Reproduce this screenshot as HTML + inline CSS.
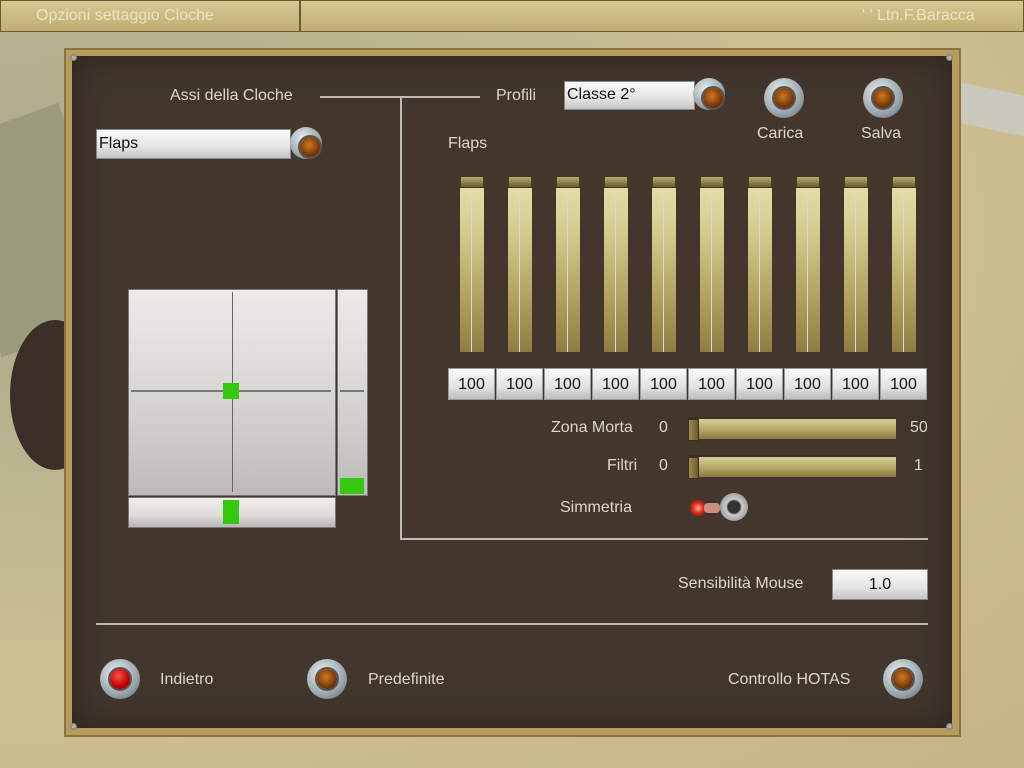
<!DOCTYPE html><html><head><meta charset="utf-8"><style>
*{margin:0;padding:0;box-sizing:border-box}
body{width:1024px;height:768px;overflow:hidden;position:relative;font-family:"Liberation Sans",sans-serif;background:#c9b98c}
.a{position:absolute}
.t{position:absolute;color:#ddd6cc;font-size:16px;white-space:nowrap}
.box{position:absolute;background:linear-gradient(#fafafa,#e4e4e4 60%,#c4c4c4);color:#111;font-size:16px;border:1px solid #888}
.knob{position:absolute;width:40px;height:40px;border-radius:50%;background:radial-gradient(circle at 40% 35%,#e8eef0,#9aa6ac 60%,#5a6268)}
.knob:after{content:"";position:absolute;left:10px;top:10px;width:20px;height:20px;border-radius:50%;background:radial-gradient(circle at 45% 40%,#d07a20,#6a2e08 70%,#2a1000);box-shadow:0 0 0 2px #555}
.bar{position:absolute;top:176px;width:24px;height:176px;background:linear-gradient(#e6e2ae,#d2c88a 35%,#ab9b58 75%,#8e7d40)}
.bar:before{content:"";position:absolute;left:11px;top:0;width:1px;height:176px;background:#d8d8e4}
.bar:after{content:"";position:absolute;left:0;top:0;width:22px;height:10px;background:linear-gradient(#b8ac70,#6a5a30);border:1px solid #4a3a20}
.v{position:absolute;top:368px;width:47px;height:32px;background:linear-gradient(#fafafa,#e2e2e2 60%,#bcbcbc);color:#111;font-size:16px;text-align:center;line-height:32px;border:1px solid #999}
.sl{position:absolute;left:688px;width:208px;height:22px;background:linear-gradient(#d8cf98,#b8aa68 50%,#8a7a40);border-top:2px solid #3a3020}
.sl:after{content:"";position:absolute;left:0;top:0;width:9px;height:20px;background:linear-gradient(90deg,#a08a50,#6a5a30);border:1px solid #3a3020}
.scr{position:absolute;width:7px;height:7px;border-radius:50%;background:radial-gradient(#ccc,#555)}
</style></head><body>
<div class="a" style="left:0;top:0;width:1024px;height:768px;background:radial-gradient(ellipse at 10% 30%,#a8a88a 0,#b9b490 30%,#cdbf93 60%,#c4b386)"></div>
<div class="a" style="left:-40px;top:120px;width:140px;height:220px;background:#9a9a7c;transform:rotate(-20deg)"></div>
<div class="a" style="left:10px;top:320px;width:90px;height:150px;border-radius:50%;background:#3a2e26"></div>
<div class="a" style="left:950px;top:90px;width:90px;height:40px;background:#c8c8bc;transform:rotate(12deg)"></div>
<div class="a" style="left:0;top:0;width:300px;height:32px;background:linear-gradient(#d6c894,#bfae72);border:1px solid #6a5a30"></div>
<div class="a" style="left:300px;top:0;width:724px;height:32px;background:linear-gradient(#d6c894,#bfae72);border:1px solid #6a5a30"></div>
<div class="t" style="left:36px;top:7px;color:#ebe3c4">Opzioni settaggio Cloche</div>
<div class="t" style="left:862px;top:7px;color:#ebe3c4">' ' Ltn.F.Baracca</div>
<div class="a" style="left:64px;top:48px;width:897px;height:689px;background:#b59d5c;border:2px solid #8a7440"></div>
<div class="a" style="left:72px;top:56px;width:880px;height:672px;background:#43372d;box-shadow:inset 0 0 40px #2e251e"></div>
<div class="scr" style="left:70px;top:54px"></div><div class="scr" style="left:946px;top:54px"></div>
<div class="scr" style="left:70px;top:723px"></div><div class="scr" style="left:946px;top:723px"></div>
<div class="t" style="left:170px;top:87px">Assi della Cloche</div>
<div class="a" style="left:320px;top:96px;width:160px;height:2px;background:#bbb"></div>
<div class="a" style="left:400px;top:96px;width:2px;height:444px;background:#bbb"></div>
<div class="a" style="left:400px;top:538px;width:528px;height:2px;background:#bbb"></div>
<div class="t" style="left:496px;top:87px">Profili</div>
<div class="box" style="left:564px;top:81px;width:131px;height:29px;padding:4px 2px">Classe 2°</div>
<div class="knob" style="left:693px;top:78px;width:32px;height:32px"></div>
<div class="knob" style="left:764px;top:78px"></div>
<div class="knob" style="left:863px;top:78px"></div>
<div class="t" style="left:757px;top:125px">Carica</div>
<div class="t" style="left:861px;top:125px">Salva</div>
<div class="box" style="left:96px;top:129px;width:195px;height:30px;padding:5px 2px">Flaps</div>
<div class="knob" style="left:290px;top:127px;width:32px;height:32px"></div>
<div class="t" style="left:448px;top:135px">Flaps</div>
<div class="bar" style="left:460px"></div><div class="bar" style="left:508px"></div><div class="bar" style="left:556px"></div><div class="bar" style="left:604px"></div><div class="bar" style="left:652px"></div><div class="bar" style="left:700px"></div><div class="bar" style="left:748px"></div><div class="bar" style="left:796px"></div><div class="bar" style="left:844px"></div><div class="bar" style="left:892px"></div>
<div class="v" style="left:448px">100</div><div class="v" style="left:496px">100</div><div class="v" style="left:544px">100</div><div class="v" style="left:592px">100</div><div class="v" style="left:640px">100</div><div class="v" style="left:688px">100</div><div class="v" style="left:736px">100</div><div class="v" style="left:784px">100</div><div class="v" style="left:832px">100</div><div class="v" style="left:880px">100</div>
<div class="t" style="left:551px;top:419px">Zona Morta</div><div class="t" style="left:659px;top:419px">0</div>
<div class="sl" style="top:417px"></div><div class="t" style="left:910px;top:419px">50</div>
<div class="t" style="left:607px;top:457px">Filtri</div><div class="t" style="left:659px;top:457px">0</div>
<div class="sl" style="top:455px"></div><div class="t" style="left:914px;top:457px">1</div>
<div class="t" style="left:560px;top:499px">Simmetria</div>
<div class="a" style="left:690px;top:500px;width:16px;height:16px;border-radius:50%;background:radial-gradient(#ffb0a0,#e02010 50%,rgba(200,0,0,0))"></div>
<div class="a" style="left:704px;top:503px;width:16px;height:10px;background:#c89080;border-radius:4px"></div>
<div class="a" style="left:720px;top:493px;width:28px;height:28px;border-radius:50%;background:radial-gradient(#333 30%,#ccc 40%,#777)"></div>
<div class="a" style="left:128px;top:289px;width:208px;height:207px;background:linear-gradient(#ecebe8,#d8d7d4 50%,#bcbbb8);border:1px solid #777"></div>
<div class="a" style="left:232px;top:292px;width:1px;height:200px;background:#666"></div>
<div class="a" style="left:131px;top:390px;width:200px;height:2px;background:#777"></div>
<div class="a" style="left:223px;top:383px;width:16px;height:16px;background:#35c80c"></div>
<div class="a" style="left:337px;top:289px;width:31px;height:207px;background:linear-gradient(#ecebe8,#d8d7d4 50%,#bcbbb8);border:1px solid #777"></div>
<div class="a" style="left:340px;top:390px;width:24px;height:2px;background:#777"></div>
<div class="a" style="left:340px;top:478px;width:24px;height:16px;background:#35c80c"></div>
<div class="a" style="left:128px;top:497px;width:208px;height:31px;background:linear-gradient(#f0efec,#dedcd8 60%,#b8b7b4);border:1px solid #777"></div>
<div class="a" style="left:223px;top:500px;width:16px;height:24px;background:#35c80c"></div>
<div class="t" style="left:678px;top:575px">Sensibilità Mouse</div>
<div class="box" style="left:832px;top:569px;width:96px;height:31px;text-align:center;line-height:29px">1.0</div>
<div class="a" style="left:96px;top:623px;width:832px;height:2px;background:#bbb"></div>
<div class="knob" style="left:100px;top:659px"></div>
<div class="a" style="left:110px;top:669px;width:20px;height:20px;border-radius:50%;background:radial-gradient(circle at 40% 35%,#ff5050,#c00000 60%,#600)"></div>
<div class="t" style="left:160px;top:671px">Indietro</div>
<div class="knob" style="left:307px;top:659px"></div>
<div class="t" style="left:368px;top:671px">Predefinite</div>
<div class="t" style="left:728px;top:671px">Controllo HOTAS</div>
<div class="knob" style="left:883px;top:659px"></div>
</body></html>
